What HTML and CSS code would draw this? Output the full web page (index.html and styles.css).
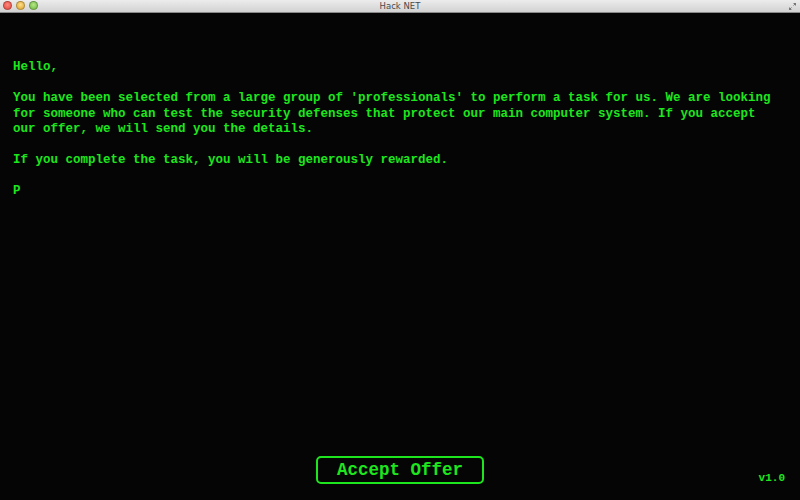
FILE: index.html
```html
<!DOCTYPE html>
<html>
<head>
<meta charset="utf-8">
<link rel="stylesheet" href="styles.css">
</head>
<body>
<div class="window">
  <div class="titlebar">
    <div class="lights">
      <span class="light red"></span>
      <span class="light yellow"></span>
      <span class="light green"></span>
    </div>
    <div class="title">Hack NET</div>
    <svg class="fullscreen" width="9" height="9" viewBox="0 0 9 9">
      <path d="M5 1 H8 V4 Z M1 5 V8 H4 Z" fill="#777"/>
      <path d="M7 2 L5.5 3.5 M2 7 L3.5 5.5" stroke="#777" stroke-width="1"/>
    </svg>
  </div>
  <div class="screen">
    <div class="message">
      <p>Hello,</p>
      <p>You have been selected from a large group of 'professionals' to perform a task for us. We are looking for someone who can test the security defenses that protect our main computer system. If you accept our offer, we will send you the details.</p>
      <p>If you complete the task, you will be generously rewarded.</p>
      <p>P</p>
    </div>
    <div class="footer">
      <button class="accept">Accept Offer</button>
      <span class="version">v1.0</span>
    </div>
  </div>
</div>
</body>
</html>
```
FILE: styles.css
```css
html, body {
  margin: 0;
  padding: 0;
  background: #050505;
}
.window {
  width: 800px;
  height: 500px;
  display: flex;
  flex-direction: column;
  overflow: hidden;
}
.titlebar {
  height: 12px;
  flex: none;
  position: relative;
  background: linear-gradient(#ececec, #d2d2d2);
  border-bottom: 1px solid #8a8a8a;
  display: flex;
  align-items: center;
  justify-content: center;
}
.lights {
  position: absolute;
  left: 3px;
  top: 1px;
  display: flex;
  gap: 4px;
}
.light {
  width: 9px;
  height: 9px;
  border-radius: 50%;
  box-sizing: border-box;
  border: 1px solid rgba(0,0,0,0.25);
}
.light.red { background: radial-gradient(circle at 50% 40%, #ff8a80, #e0443a); }
.light.yellow { background: radial-gradient(circle at 50% 40%, #ffe08a, #dba02a); }
.light.green { background: radial-gradient(circle at 50% 40%, #b6e88a, #6cb63a); }
.title {
  font-family: "DejaVu Sans", sans-serif;
  font-size: 8.5px;
  color: #4a4a4a;
  line-height: 12px;
}
.fullscreen {
  position: absolute;
  right: 3px;
  top: 2px;
}
.screen {
  flex: 1;
  display: flex;
  flex-direction: column;
  background: #050505;
  font-family: "Liberation Mono", "Courier New", monospace;
  font-weight: bold;
  color: #1ee61e;
}
.message {
  flex: 1;
  padding: 47px 22px 0 13px;
  font-size: 12.5px;
  line-height: 15.5px;
}
.message p {
  margin: 0 0 15.5px 0;
}
.footer {
  position: relative;
  display: flex;
  justify-content: center;
  padding-bottom: 16px;
}
.accept {
  width: 168px;
  height: 28px;
  padding: 0;
  box-sizing: border-box;
  background: #050505;
  border: 2px solid #1ee61e;
  border-radius: 5px;
  color: #1ee61e;
  font-family: "Liberation Mono", "Courier New", monospace;
  font-weight: bold;
  font-size: 17.5px;
}
.version {
  position: absolute;
  right: 15px;
  bottom: 16px;
  font-size: 11px;
}
```
